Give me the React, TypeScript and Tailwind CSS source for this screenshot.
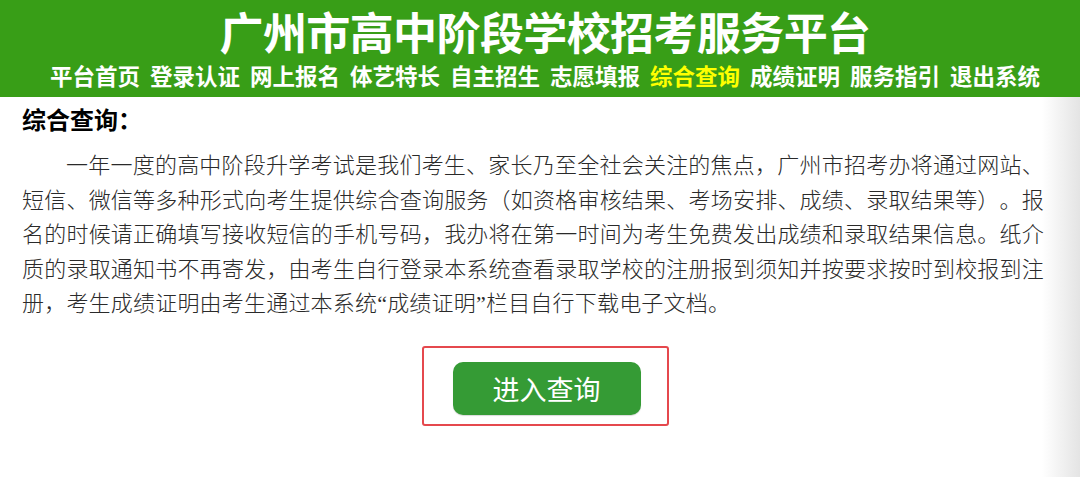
import * as React from "react";

const navItems = [
  "平台首页",
  "登录认证",
  "网上报名",
  "体艺特长",
  "自主招生",
  "志愿填报",
  "综合查询",
  "成绩证明",
  "服务指引",
  "退出系统",
];

const sans = "font-['Noto_Sans_CJK_SC',sans-serif]";
const latin = "font-['Liberation_Serif',serif]";

export default function App() {
  return (
    <div className="relative min-h-[477px] w-full overflow-hidden bg-white">
      <div className="w-[1090px]">
        {/* green banner */}
        <header className={`flex h-[97px] flex-col items-center bg-[#389e17] pt-[6px] ${sans}`}>
          <h1 className="text-[44px] font-bold leading-[50px] tracking-[-0.6px] text-white">
            广州市高中阶段学校招考服务平台
          </h1>
          <nav className="mt-[5px] flex gap-[10px] text-[22.5px] font-bold leading-[28px]">
            {navItems.map((n) => (
              <span key={n} className={n === "综合查询" ? "text-[#ffff00]" : "text-white"}>
                {n}
              </span>
            ))}
          </nav>
        </header>

        <main className="px-[22px] pt-[9px]">
          <h2 className={`text-[24px] font-bold leading-[26px] text-black ${sans}`}>综合查询：</h2>
          <p className={`mt-[14px] w-[1022px] indent-[44px] text-justify text-[22px] font-light leading-[34.5px] tracking-[0.2px] text-[#2a2a2a] [text-spacing-trim:space-all] ${sans}`}>
            一年一度的高中阶段升学考试是我们考生、家长乃至全社会关注的焦点，广州市招考办将通过网站、短信、微信等多种形式向考生提供综合查询服务（如资格审核结果、考场安排、成绩、录取结果等）。报名的时候请正确填写接收短信的手机号码，我办将在第一时间为考生免费发出成绩和录取结果信息。纸介质的录取通知书不再寄发，由考生自行登录本系统查看录取学校的注册报到须知并按要求按时到校报到注册，考生成绩证明由考生通过本系统<span className={latin}>“</span>成绩证明<span className={latin}>”</span>栏目自行下载电子文档。
          </p>

          <div className="mt-[24px] flex justify-center">
            <div className="h-[80px] w-[247px] rounded-[3px] border-2 border-[#e5484d] pl-[29px] pt-[14px]">
              <button
                className={`flex h-[53px] w-[188px] items-center justify-center rounded-[10px] bg-[#359b35] text-[27px] leading-none text-white shadow-[0_1px_1px_rgba(0,0,0,0.15)] ${sans}`}
              >
                进入查询
              </button>
            </div>
          </div>
        </main>
      </div>

      {/* soft shade along the right edge */}
      <div className="pointer-events-none absolute bottom-0 right-0 top-[97px] w-[38px] bg-gradient-to-r from-white/0 to-[#e4e4e4]" />
    </div>
  );
}
